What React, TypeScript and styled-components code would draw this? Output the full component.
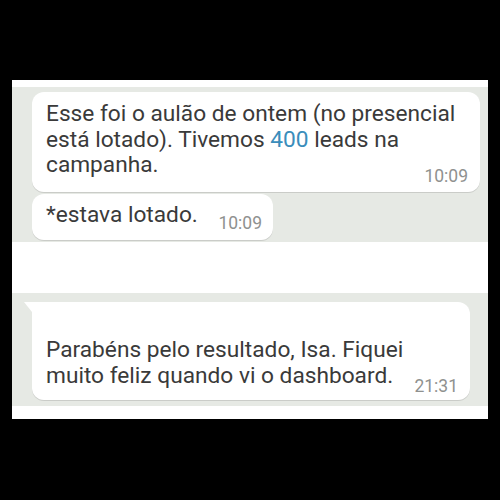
import React from "react";
import styled, { createGlobalStyle } from "styled-components";

const Global = createGlobalStyle`
  html, body { margin: 0; padding: 0; background: #000; }
  body { font-family: Roboto, "Noto Sans", sans-serif; }
`;

const Page = styled.div`
  width: 500px;
  height: 500px;
  background: #000;
  padding: 80px 12px 0 12px;
  box-sizing: border-box;
`;

const Screen = styled.div`
  width: 476px;
  height: 339px;
  background: #fff;
  display: flex;
  flex-direction: column;
`;

const ChatArea = styled.div<{ $top: number; $h: number; $pt: number }>`
  margin-top: ${(p) => p.$top}px;
  height: ${(p) => p.$h}px;
  background: #e6e9e4;
  box-sizing: border-box;
  padding: ${(p) => p.$pt}px 8px 0 20px;
  display: flex;
  flex-direction: column;
  align-items: flex-start;
  gap: 2px;
`;

const Bubble = styled.div<{ $w: number; $tail?: boolean }>`
  position: relative;
  width: ${(p) => p.$w}px;
  box-sizing: border-box;
  background: #fff;
  border-radius: ${(p) => (p.$tail ? "0 12px 12px 12px" : "12px")};
  box-shadow: 0 1px 0.5px rgba(0, 0, 0, 0.12);
  color: #3a3a3a;
  ${(p) =>
    p.$tail &&
    `
    &::before {
      content: "";
      position: absolute;
      left: -8px;
      top: 0;
      border-top: 10px solid #fff;
      border-left: 8px solid transparent;
    }
  `}
`;

const Block = styled.div<{ $pad: string }>`
  padding: ${(p) => p.$pad};
`;

const Row = styled.div<{ $pad: string }>`
  display: flex;
  align-items: flex-end;
  padding: ${(p) => p.$pad};
`;

const Text = styled.div<{ $mb?: number }>`
  font-size: 22.7px;
  line-height: 25.5px;
  white-space: nowrap;
  flex-shrink: 0;
  margin-bottom: ${(p) => p.$mb ?? 0}px;
`;

const Link = styled.span`
  color: #3a8dbb;
`;

const Time = styled.div<{ $mt?: number; $ml?: string }>`
  font-size: 17.5px;
  line-height: 17px;
  color: #8f918f;
  text-align: right;
  white-space: nowrap;
  margin-top: ${(p) => p.$mt ?? 0}px;
  margin-left: ${(p) => p.$ml ?? "0"};
`;

export default function App() {
  return (
    <>
      <Global />
      <Page>
        <Screen>
          <ChatArea $top={7} $h={155} $pt={5}>
            <Bubble $w={448}>
              <Block $pad="9.3px 12px 7.3px 14px">
                <Text>
                  Esse foi o aulão de ontem (no presencial
                  <br />
                  está lotado). Tivemos <Link>400</Link> leads na
                  <br />
                  campanha.
                </Text>
                <Time $mt={-10}>10:09</Time>
              </Block>
            </Bubble>
            <Bubble $w={241}>
              <Row $pad="8.3px 11px 8.3px 14px">
                <Text $mb={4}>*estava lotado.</Text>
                <Time $ml="auto">10:09</Time>
              </Row>
            </Bubble>
          </ChatArea>
          <ChatArea $top={51} $h={113} $pt={9}>
            <Bubble $w={438} $tail>
              <Row $pad="35.3px 12px 5.3px 14px">
                <Text $mb={6.3}>
                  Parabéns pelo resultado, Isa. Fiquei
                  <br />
                  muito feliz quando vi o dashboard.
                </Text>
                <Time $ml="auto">21:31</Time>
              </Row>
            </Bubble>
          </ChatArea>
        </Screen>
      </Page>
    </>
  );
}
